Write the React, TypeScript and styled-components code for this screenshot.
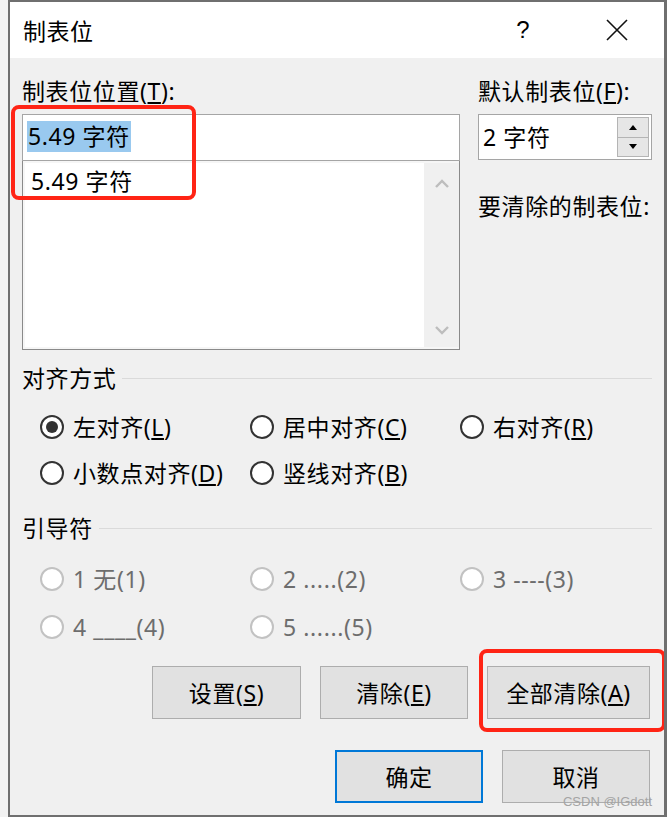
import React from 'react';
import styled, { createGlobalStyle } from 'styled-components';

const GlobalStyle = createGlobalStyle`
	html, body {
		margin: 0;
		padding: 0;
		background: #f2f2f2;
	}
	body {
		font-family: "Noto Sans", "Noto Sans CJK SC", sans-serif;
		color: #000;
	}
`;

const Dialog = styled.div`
	position: relative;
	box-sizing: border-box;
	margin-left: 8px;
	width: 659px;
	height: 817px;
	background: #f0f0f0;
	border: 2px solid #6f6f6f;
	border-right-width: 3px;
	overflow: hidden;
`;

const TitleBar = styled.div`
	display: flex;
	align-items: center;
	height: 56px;
	padding-left: 13px;
	background: #fff;
`;

const Title = styled.div`
	font-family: "Noto Sans CJK SC", sans-serif;
	font-size: 23px;
	letter-spacing: 0.5px;
	line-height: 30px;
	flex: 1;
`;

const Controls = styled.div`
	display: flex;
	align-items: center;
	gap: 48px;
	padding-right: 24px;
`;

const TitleButton = styled.div`
	display: flex;
	align-items: center;
	justify-content: center;
	width: 46px;
	height: 56px;
	font-family: "Liberation Sans", sans-serif;
	font-size: 24px;
`;

const Body = styled.div`
	padding: 0 12px;
	font-size: 23px;
	letter-spacing: 0.6px;
`;

const TopGrid = styled.div`
	display: grid;
	grid-template-columns: 438px 174px;
	column-gap: 18px;
	margin-top: 18px;
`;

const Column = styled.div`
	display: flex;
	flex-direction: column;
`;

const Label = styled.div<{ $mt?: number }>`
	line-height: 30px;
	height: 30px;
	white-space: nowrap;
	margin-top: ${p => p.$mt || 0}px;
`;

const Annotated = styled.div`
	position: relative;
`;

const Marker = styled.div<{ $l: number; $t: number; $w: number; $h: number }>`
	position: absolute;
	left: ${p => p.$l}px;
	top: ${p => p.$t}px;
	width: ${p => p.$w}px;
	height: ${p => p.$h}px;
	box-sizing: border-box;
	border: 4px solid #ff2415;
	border-radius: 8px;
	pointer-events: none;
	z-index: 2;
`;

const TextBox = styled.div`
	box-sizing: border-box;
	margin-top: 8px;
	height: 47px;
	background: #fff;
	border: 1px solid #a5a5a5;
	display: flex;
	align-items: center;
	padding: 0 0 3px 4px;
`;

const Selected = styled.span`
	background: #99c9ef;
	line-height: 31px;
	padding: 0 1px;
`;

const ListBox = styled.div`
	box-sizing: border-box;
	height: 189px;
	border: 1px solid #8a8a8a;
	border-top: none;
	padding: 2px 0 2px 2px;
	background: #f6f6f6;
	display: flex;
`;

const ListArea = styled.div`
	flex: 1;
	background: #fff;
	padding: 3px 0 0 6px;
`;

const ListItem = styled.div`
	line-height: 30px;
`;

const ScrollTrack = styled.div`
	width: 35px;
	background: #f0f0f0;
	display: flex;
	flex-direction: column;
	align-items: center;
	justify-content: space-between;
	padding: 16px 0 12px;
`;

const SpinBox = styled.div`
	box-sizing: border-box;
	margin-top: 8px;
	height: 46px;
	background: #fff;
	border: 1px solid #a5a5a5;
	display: flex;
	align-items: center;
	padding: 2px 2px 2px 4px;
`;

const SpinValue = styled.div`
	flex: 1;
	line-height: 30px;
`;

const SpinButtons = styled.div`
	display: flex;
	flex-direction: column;
	width: 32px;
	height: 40px;
`;

const SpinButton = styled.div`
	flex: 1;
	box-sizing: border-box;
	background: #e6e6e6;
	border: 1px solid #b4b4b4;
	display: flex;
	align-items: center;
	justify-content: center;
	& + & {
		border-top: none;
	}
`;

const GroupHeading = styled.div<{ $mt: number }>`
	display: flex;
	align-items: center;
	gap: 6px;
	margin-top: ${p => p.$mt}px;
	line-height: 30px;
	&::after {
		content: '';
		flex: 1;
		height: 1px;
		background: #dadada;
	}
`;

const RadioRow = styled.div<{ $mt: number }>`
	display: grid;
	grid-template-columns: 210px 210px 210px;
	padding-left: 18px;
	margin-top: ${p => p.$mt}px;
	height: 34px;
`;

const RadioItem = styled.div<{ $disabled?: boolean }>`
	display: flex;
	align-items: center;
	gap: 9px;
	line-height: 30px;
	white-space: nowrap;
	color: ${p => (p.$disabled ? '#6d6d6d' : '#000')};
`;

const RadioCircle = styled.span<{ $checked?: boolean; $disabled?: boolean }>`
	box-sizing: border-box;
	width: 24px;
	height: 24px;
	border-radius: 50%;
	background: #fff;
	border: 2px solid ${p => (p.$disabled ? '#c2c2c2' : '#333')};
	display: flex;
	align-items: center;
	justify-content: center;
	flex-shrink: 0;
	&::after {
		content: '';
		display: ${p => (p.$checked ? 'block' : 'none')};
		width: 12px;
		height: 12px;
		border-radius: 50%;
		background: #333;
	}
`;

const ButtonRow = styled.div<{ $mt: number }>`
	display: flex;
	justify-content: flex-end;
	gap: 19px;
	padding-right: 2px;
	margin-top: ${p => p.$mt}px;
`;

const Button = styled.div<{ $w: number; $default?: boolean }>`
	box-sizing: border-box;
	width: ${p => p.$w}px;
	height: 53px;
	background: #e1e1e1;
	border: ${p => (p.$default ? '2px solid #0078d7' : '1px solid #adadad')};
	display: flex;
	align-items: center;
	justify-content: center;
	line-height: 30px;
`;

const Watermark = styled.div`
	position: absolute;
	right: 12px;
	bottom: 6px;
	font-family: "Liberation Sans", sans-serif;
	font-size: 13px;
	color: #a4a4a4;
	z-index: 3;
`;

const Chevron = ({ up }: { up?: boolean }) => (
	<svg width='14' height='9' viewBox='0 0 14 9'>
		<path d={up ? 'M1 8 L7 2 L13 8' : 'M1 1 L7 7 L13 1'} fill='none' stroke='#bdbdbd' strokeWidth='2.4' />
	</svg>
);

const Triangle = ({ up }: { up?: boolean }) => (
	<svg width='10' height='6' viewBox='0 0 10 6'>
		<path d={up ? 'M1 6 L5 1 L9 6 Z' : 'M1 0 L5 5 L9 0 Z'} fill='#000' />
	</svg>
);

const alignRows = [
	[{ text: '左对齐(', key: 'L', checked: true }, { text: '居中对齐(', key: 'C' }, { text: '右对齐(', key: 'R' }],
	[{ text: '小数点对齐(', key: 'D' }, { text: '竖线对齐(', key: 'B' }]
];

const leaderRows = [
	['1 无(1)', '2 .....(2)', '3 ----(3)'],
	['4 ____(4)', '5 ......(5)']
];

const App = () => (
	<>
		<GlobalStyle />
		<Dialog>
			<TitleBar>
				<Title>制表位</Title>
				<Controls>
					<TitleButton>?</TitleButton>
					<TitleButton>
						<svg width='22' height='22' viewBox='0 0 22 22'>
							<path d='M1 1 L21 21 M21 1 L1 21' stroke='#111' strokeWidth='1.6' />
						</svg>
					</TitleButton>
				</Controls>
			</TitleBar>
			<Body>
				<TopGrid>
					<Column>
						<Label>制表位位置(<u>T</u>):</Label>
						<Annotated>
							<Marker $l={-11} $t={-1} $w={185} $h={95} />
							<TextBox><Selected>5.49 字符</Selected></TextBox>
							<ListBox>
								<ListArea><ListItem>5.49 字符</ListItem></ListArea>
								<ScrollTrack>
									<Chevron up />
									<Chevron />
								</ScrollTrack>
							</ListBox>
						</Annotated>
					</Column>
					<Column>
						<Label>默认制表位(<u>F</u>):</Label>
						<SpinBox>
							<SpinValue>2 字符</SpinValue>
							<SpinButtons>
								<SpinButton><Triangle up /></SpinButton>
								<SpinButton><Triangle /></SpinButton>
							</SpinButtons>
						</SpinBox>
						<Label $mt={31}>要清除的制表位:</Label>
					</Column>
				</TopGrid>

				<GroupHeading $mt={13}>对齐方式</GroupHeading>
				{alignRows.map((row, i) => (
					<RadioRow key={i} $mt={i === 0 ? 17 : 12}>
						{row.map(item => (
							<RadioItem key={item.key}>
								<RadioCircle $checked={item.checked} />
								<span>{item.text}<u>{item.key}</u>)</span>
							</RadioItem>
						))}
					</RadioRow>
				))}

				<GroupHeading $mt={23}>引导符</GroupHeading>
				{leaderRows.map((row, i) => (
					<RadioRow key={i} $mt={i === 0 ? 19 : 14}>
						{row.map(text => (
							<RadioItem key={text} $disabled>
								<RadioCircle $disabled />
								<span>{text}</span>
							</RadioItem>
						))}
					</RadioRow>
				))}

				<ButtonRow $mt={22}>
					<Button $w={149}>设置(<u>S</u>)</Button>
					<Button $w={148}>清除(<u>E</u>)</Button>
					<Annotated>
						<Marker $l={-8} $t={-17} $w={187} $h={83} />
						<Button $w={163}>全部清除(<u>A</u>)</Button>
					</Annotated>
				</ButtonRow>
				<ButtonRow $mt={31}>
					<Button $w={148} $default>确定</Button>
					<Button $w={148}>取消</Button>
				</ButtonRow>
			</Body>
			<Watermark>CSDN @IGdott</Watermark>
		</Dialog>
	</>
);

export default App;
